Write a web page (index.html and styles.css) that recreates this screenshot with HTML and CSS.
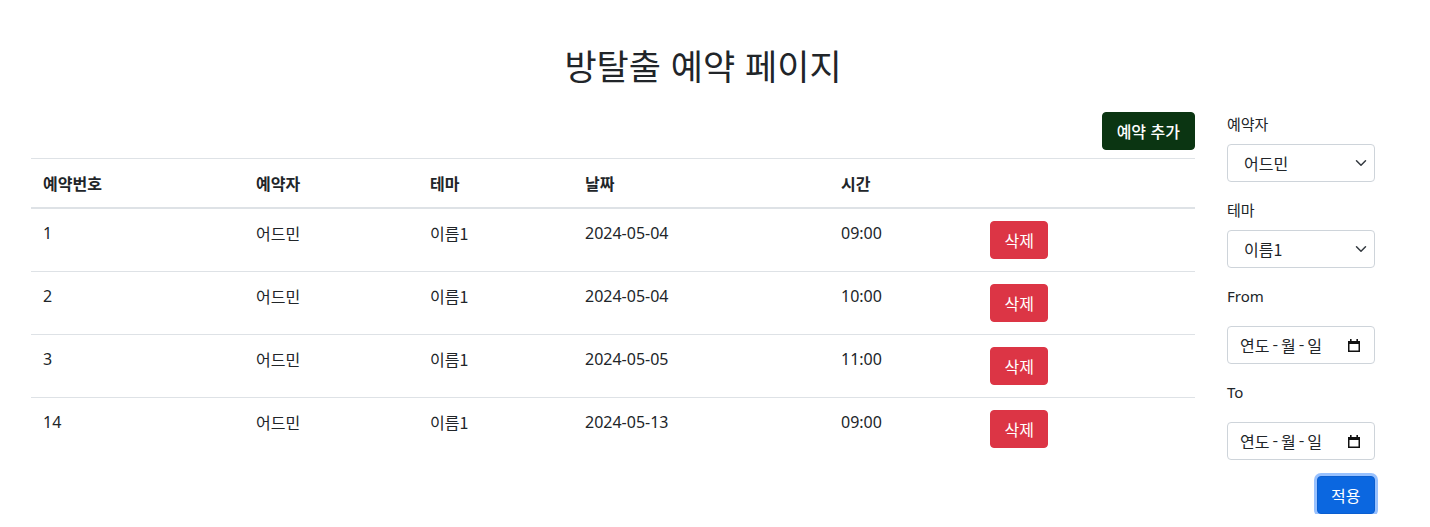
FILE: index.html
```html
<!DOCTYPE html>
<html lang="ko">
<head>
<meta charset="utf-8">
<title>방탈출 예약 페이지</title>
<link rel="stylesheet" href="styles.css">
</head>
<body>
<h1 class="title">방탈출 예약 페이지</h1>
<div class="layout">
  <main class="main">
    <div class="toolbar">
      <button class="btn btn-add">예약 추가</button>
    </div>
    <table class="table">
      <thead>
        <tr>
          <th class="c1">예약번호</th>
          <th class="c2">예약자</th>
          <th class="c3">테마</th>
          <th class="c4">날짜</th>
          <th class="c5">시간</th>
          <th class="c6"></th>
        </tr>
      </thead>
      <tbody>
        <tr><td>1</td><td>어드민</td><td>이름1</td><td>2024-05-04</td><td>09:00</td><td><button class="btn btn-del">삭제</button></td></tr>
        <tr><td>2</td><td>어드민</td><td>이름1</td><td>2024-05-04</td><td>10:00</td><td><button class="btn btn-del">삭제</button></td></tr>
        <tr><td>3</td><td>어드민</td><td>이름1</td><td>2024-05-05</td><td>11:00</td><td><button class="btn btn-del">삭제</button></td></tr>
        <tr><td>14</td><td>어드민</td><td>이름1</td><td>2024-05-13</td><td>09:00</td><td><button class="btn btn-del">삭제</button></td></tr>
      </tbody>
    </table>
  </main>
  <aside class="filter">
    <div class="field">
      <label class="label">예약자</label>
      <div class="select-wrap">
        <select class="select"><option>어드민</option></select>
        <svg class="chev" width="16" height="12" viewBox="0 0 16 16"><path d="M2 5l6 6 6-6" fill="none" stroke="#343a40" stroke-width="2" stroke-linecap="round" stroke-linejoin="round"/></svg>
      </div>
    </div>
    <div class="field">
      <label class="label">테마</label>
      <div class="select-wrap">
        <select class="select"><option>이름1</option></select>
        <svg class="chev" width="16" height="12" viewBox="0 0 16 16"><path d="M2 5l6 6 6-6" fill="none" stroke="#343a40" stroke-width="2" stroke-linecap="round" stroke-linejoin="round"/></svg>
      </div>
    </div>
    <div class="field">
      <label class="label label-date">From</label>
      <div class="date">
        <span class="date-text">연도<span class="sep">-</span>월<span class="sep">-</span>일</span>
        <svg class="cal" width="14" height="15" viewBox="0 0 14 15"><rect x="1.75" y="3.75" width="10.5" height="9.5" fill="none" stroke="#111" stroke-width="1.5"/><rect x="1" y="3" width="12" height="3" fill="#111"/><rect x="3" y="1" width="1.6" height="3" fill="#111"/><rect x="9.4" y="1" width="1.6" height="3" fill="#111"/></svg>
      </div>
    </div>
    <div class="field">
      <label class="label label-date">To</label>
      <div class="date">
        <span class="date-text">연도<span class="sep">-</span>월<span class="sep">-</span>일</span>
        <svg class="cal" width="14" height="15" viewBox="0 0 14 15"><rect x="1.75" y="3.75" width="10.5" height="9.5" fill="none" stroke="#111" stroke-width="1.5"/><rect x="1" y="3" width="12" height="3" fill="#111"/><rect x="3" y="1" width="1.6" height="3" fill="#111"/><rect x="9.4" y="1" width="1.6" height="3" fill="#111"/></svg>
      </div>
    </div>
    <div class="actions">
      <button class="btn btn-apply">적용</button>
    </div>
  </aside>
</div>
</body>
</html>
```

FILE: styles.css
```css
* { box-sizing: border-box; }

body {
  margin: 0;
  font-family: "Noto Sans", "Noto Sans CJK KR", sans-serif;
  font-size: 16px;
  line-height: 24px;
  color: #212529;
  background: #fff;
}

.title {
  margin: 41px 0 23px;
  padding-right: 24px;
  text-align: center;
  font-family: "Noto Sans CJK KR", sans-serif;
  font-weight: 400;
  font-size: 35px;
  line-height: 48px;
}

.layout {
  display: flex;
  gap: 32px;
  padding: 0 55px 0 31px;
}

.main { flex: 1; }

.toolbar {
  display: flex;
  justify-content: flex-end;
  margin-bottom: 8px;
}

.btn {
  font-family: "Noto Sans CJK KR", sans-serif;
  font-size: 16px;
  line-height: 24px;
  padding: 6px 13.5px;
  border: 1px solid transparent;
  border-radius: 4px;
  color: #fff;
  cursor: pointer;
}

.btn-add {
  background: #0b3512;
  border-color: #0b3512;
  font-weight: 500;
  padding: 6px 14px;
}

.btn-del {
  background: #dc3545;
  border-color: #dc3545;
}

.btn-apply {
  background: #0b67e0;
  border-color: #0a5ed0;
  box-shadow: 0 0 0 3px rgba(49, 132, 253, 0.5);
}

.table {
  width: 100%;
  border-collapse: collapse;
}

.table th, .table td {
  padding: 12px;
  text-align: left;
  vertical-align: top;
  border-bottom: 1px solid #dee2e6;
}

.table thead th {
  font-weight: 700;
  font-family: "Noto Sans CJK KR", sans-serif;
  border-top: 1px solid #dee2e6;
  border-bottom: 2px solid #dee2e6;
}

.table tbody tr:last-child td { border-bottom: none; }

.table td:nth-child(2), .table td:nth-child(3) { font-family: "Noto Sans CJK KR", sans-serif; }

.c1 { width: 213px; }
.c2 { width: 174px; }
.c3 { width: 155px; }
.c4 { width: 256px; }
.c5 { width: 149px; }

.filter {
  width: 148px;
  flex-shrink: 0;
  font-family: "Noto Sans", "Noto Sans CJK KR", sans-serif;
}

.field { margin-bottom: 16px; }

.label {
  display: block;
  margin-bottom: 8px;
  font-family: "Noto Sans CJK KR", sans-serif;
  font-size: 15px;
}

.label-date {
  margin-bottom: 18px;
  font-family: "Noto Sans", sans-serif;
}

.select-wrap { position: relative; }

.select {
  appearance: none;
  -webkit-appearance: none;
  display: block;
  width: 100%;
  height: 38px;
  padding: 6px 36px 6px 16px;
  font-family: "Noto Sans CJK KR", sans-serif;
  font-size: 16px;
  line-height: 24px;
  color: #212529;
  background: #fff;
  border: 1px solid #ced4da;
  border-radius: 4px;
}

.chev {
  position: absolute;
  right: 6px;
  top: 13px;
  pointer-events: none;
}

.date {
  display: flex;
  align-items: center;
  justify-content: space-between;
  height: 38px;
  padding: 6px 13px 6px 12px;
  border: 1px solid #ced4da;
  border-radius: 4px;
  background: #fff;
}

.date-text {
  font-family: "Noto Sans CJK KR", sans-serif;
  font-size: 16px;
  color: #212529;
}

.sep { margin: 0 3px; }

.cal { display: block; }

.actions {
  display: flex;
  justify-content: flex-end;
}
```
